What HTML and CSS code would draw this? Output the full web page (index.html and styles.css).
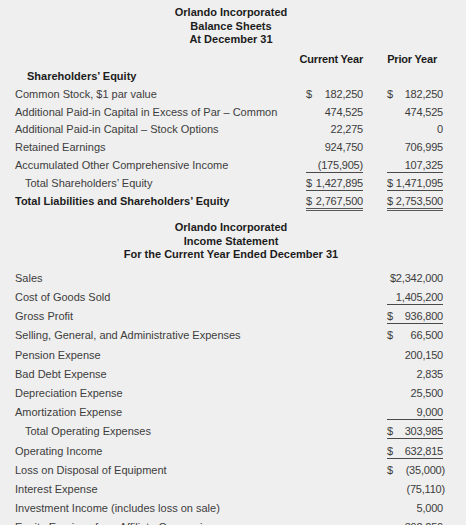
FILE: index.html
```html
<!DOCTYPE html>
<html>
<head>
<meta charset="utf-8">
<link rel="stylesheet" href="styles.css">
</head>
<body>
<div class="page">
  <div class="title title-bs">
    <div>Orlando Incorporated</div>
    <div>Balance Sheets</div>
    <div>At December 31</div>
  </div>
  <div class="bs-head">
    <div class="lbl"></div>
    <div class="c1 hd"><span>Current Year</span></div>
    <div class="c2 hd hd2"><span>Prior Year</span></div>
  </div>
  <div class="bs-section">Shareholders’ Equity</div>
  <div class="bs-row">
    <div class="lbl">Common Stock, $1 par value</div>
    <div class="c1 money"><span>$</span><span>182,250</span></div>
    <div class="c2 money"><span>$</span><span>182,250</span></div>
  </div>
  <div class="bs-row">
    <div class="lbl">Additional Paid-in Capital in Excess of Par – Common</div>
    <div class="c1">474,525</div>
    <div class="c2">474,525</div>
  </div>
  <div class="bs-row">
    <div class="lbl">Additional Paid-in Capital – Stock Options</div>
    <div class="c1">22,275</div>
    <div class="c2">0</div>
  </div>
  <div class="bs-row">
    <div class="lbl">Retained Earnings</div>
    <div class="c1">924,750</div>
    <div class="c2">706,995</div>
  </div>
  <div class="bs-row">
    <div class="lbl">Accumulated Other Comprehensive Income</div>
    <div class="c1 ul">(175,905)</div>
    <div class="c2 ul">107,325</div>
  </div>
  <div class="bs-row">
    <div class="lbl indent">Total Shareholders’ Equity</div>
    <div class="c1 money ul"><span>$</span><span>1,427,895</span></div>
    <div class="c2 money ul"><span>$</span><span>1,471,095</span></div>
  </div>
  <div class="bs-row bold">
    <div class="lbl">Total Liabilities and Shareholders’ Equity</div>
    <div class="c1 money dul"><span>$</span><span>2,767,500</span></div>
    <div class="c2 money dul"><span>$</span><span>2,753,500</span></div>
  </div>

  <div class="title title-is">
    <div>Orlando Incorporated</div>
    <div>Income Statement</div>
    <div>For the Current Year Ended December 31</div>
  </div>
  <div class="is-rows">
    <div class="is-row"><div class="lbl">Sales</div><div class="c2">$2,342,000</div></div>
    <div class="is-row"><div class="lbl">Cost of Goods Sold</div><div class="c2 ul">1,405,200</div></div>
    <div class="is-row"><div class="lbl">Gross Profit</div><div class="c2 money ul"><span>$</span><span>936,800</span></div></div>
    <div class="is-row"><div class="lbl">Selling, General, and Administrative Expenses</div><div class="c2 money"><span>$</span><span>66,500</span></div></div>
    <div class="is-row"><div class="lbl">Pension Expense</div><div class="c2">200,150</div></div>
    <div class="is-row"><div class="lbl">Bad Debt Expense</div><div class="c2">2,835</div></div>
    <div class="is-row"><div class="lbl">Depreciation Expense</div><div class="c2">25,500</div></div>
    <div class="is-row"><div class="lbl">Amortization Expense</div><div class="c2 ul">9,000</div></div>
    <div class="is-row"><div class="lbl indent">Total Operating Expenses</div><div class="c2 money ul"><span>$</span><span>303,985</span></div></div>
    <div class="is-row"><div class="lbl">Operating Income</div><div class="c2 money ul"><span>$</span><span>632,815</span></div></div>
    <div class="is-row"><div class="lbl">Loss on Disposal of Equipment</div><div class="c2 money"><span>$</span><span class="neg">(35,000)</span></div></div>
    <div class="is-row"><div class="lbl">Interest Expense</div><div class="c2"><span class="neg">(75,110)</span></div></div>
    <div class="is-row"><div class="lbl">Investment Income (includes loss on sale)</div><div class="c2">5,000</div></div>
    <div class="is-row"><div class="lbl">Equity Earnings from Affiliate Companies</div><div class="c2">392,250</div></div>
  </div>
</div>
</body>
</html>
```

FILE: styles.css
```css
html, body {
  margin: 0;
  padding: 0;
  background: #efefef;
}
body {
  font-family: "Liberation Sans", Arial, sans-serif;
  font-size: 11px;
  color: #3d3d3d;
  width: 466px;
  height: 525px;
  overflow: hidden;
}
.page {
  width: 466px;
}
.title {
  text-align: center;
  font-weight: bold;
  color: #1c1c1c;
  line-height: 13.5px;
  padding-right: 4px;
}
.title-bs {
  padding-top: 6px;
}
.title-is {
  margin-top: 11.6px;
}
.bs-head, .bs-row, .is-row {
  display: grid;
  grid-template-columns: 1fr 57px 56px;
  column-gap: 24px;
  padding: 0 23px 0 15px;
  box-sizing: border-box;
}
.is-row {
  grid-template-columns: 1fr 56px;
}
.bs-head {
  height: 17px;
  align-items: center;
  margin-top: 4px;
}
.hd {
  display: flex;
  justify-content: flex-end;
  font-weight: bold;
  color: #1c1c1c;
  letter-spacing: -0.4px;
  white-space: nowrap;
}
.hd span {
  flex: none;
}
.hd2 {
  padding-right: 6px;
}
.bs-section {
  height: 17.5px;
  line-height: 17.5px;
  padding-left: 27px;
  font-weight: bold;
  color: #1c1c1c;
}
.bs-row {
  height: 17.8px;
  padding-top: 1.9px;
  align-items: start;
}
.is-rows {
  margin-top: 6.6px;
}
.is-row {
  height: 19.2px;
  padding-top: 2.6px;
  align-items: start;
}
.lbl {
  line-height: 14px;
  white-space: nowrap;
}
.indent {
  padding-left: 10px;
}
.c1, .c2 {
  line-height: 14px;
  text-align: right;
  white-space: nowrap;
  letter-spacing: -0.2px;
}
.money {
  display: flex;
  justify-content: space-between;
}
.neg {
  margin-right: -2px;
}
.ul {
  border-bottom: 1px solid #4a4a4a;
}
.dul {
  border-bottom: 3px double #5a5a5a;
}
.bold .lbl {
  font-weight: bold;
  color: #1c1c1c;
}
.bold .c1, .bold .c2 {
  color: #3d3d3d;
}
```
